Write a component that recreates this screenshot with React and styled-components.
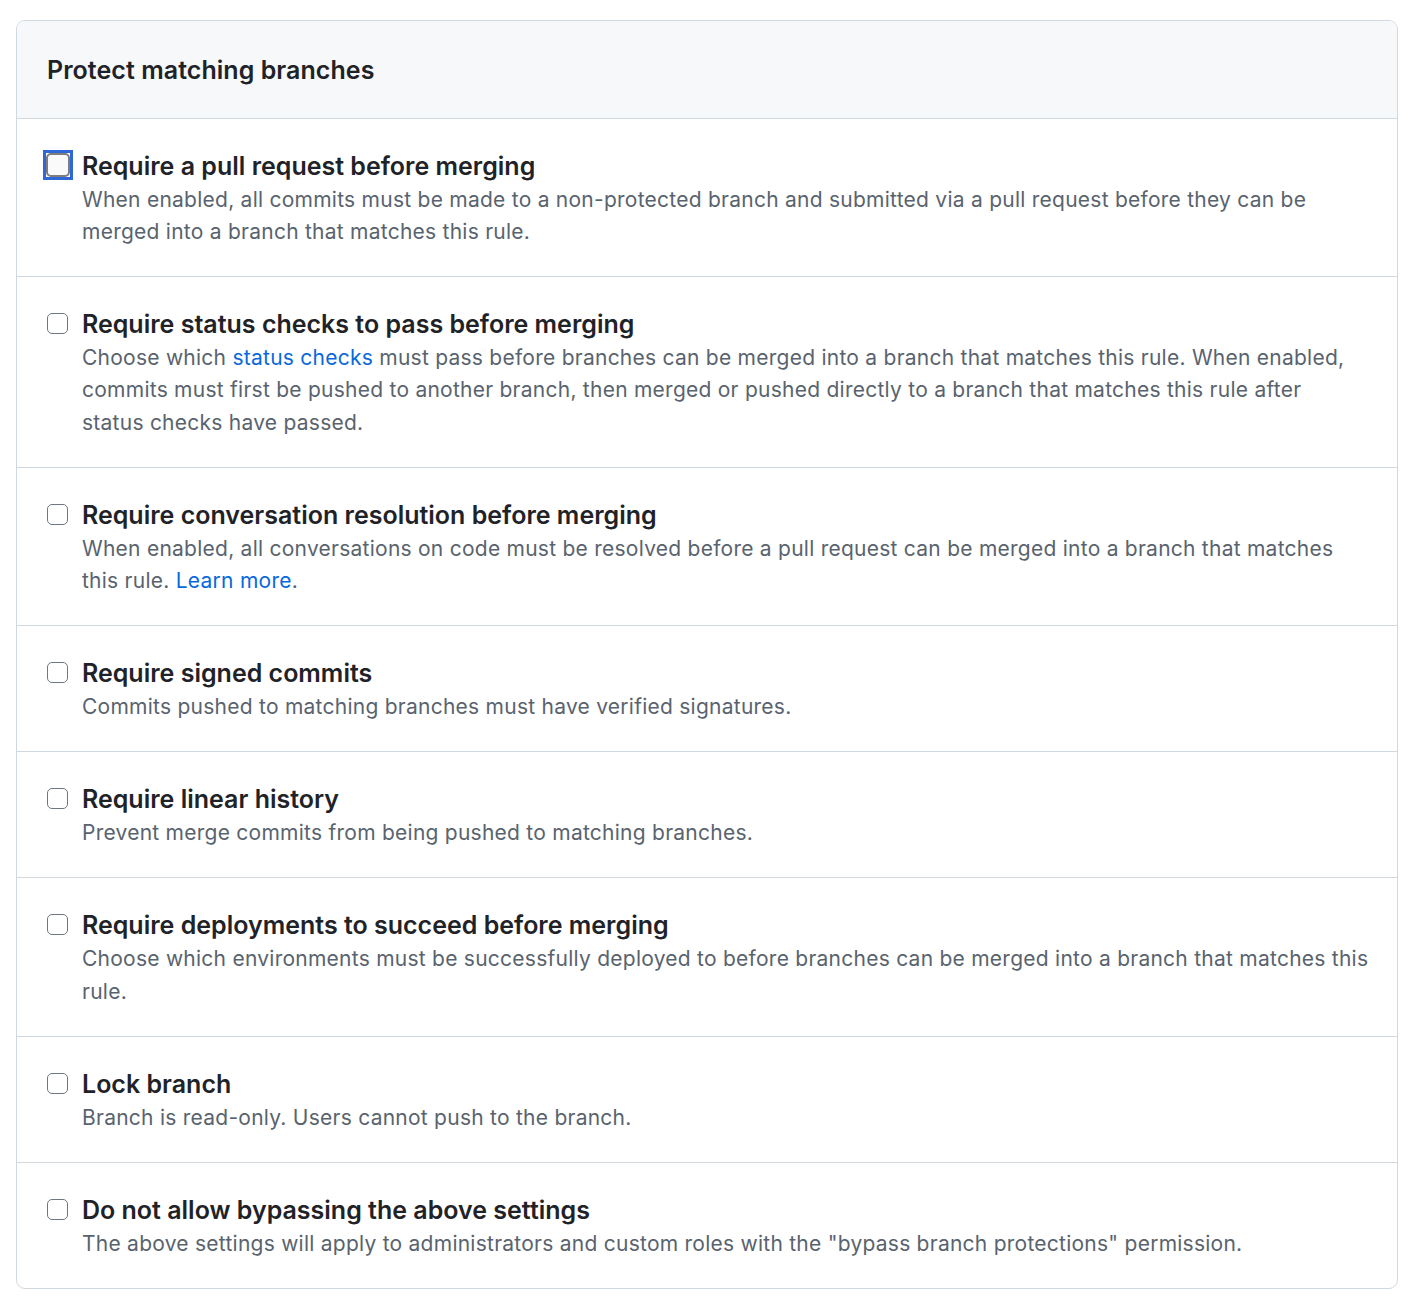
import React from "react";
import styled, { createGlobalStyle } from "styled-components";

const GlobalStyle = createGlobalStyle`
  body {
    margin: 0;
    background: #ffffff;
    font-family: "Inter", "Noto Sans", sans-serif;
    -webkit-font-smoothing: antialiased;
  }
`;

const Page = styled.div`
  padding: 20px 22px 20px 16px;
`;

const Card = styled.section`
  border: 1px solid #d1d9e0;
  border-radius: 9px;
  overflow: hidden;
  background: #ffffff;
`;

const Header = styled.header`
  display: flex;
  align-items: center;
  height: 97px;
  padding: 0 30px;
  background: #f6f8fa;
  border-bottom: 1px solid #d1d9e0;
`;

const HeaderTitle = styled.h3`
  margin: 0;
  font-size: 25px;
  font-weight: 600;
  color: #1f2328;
  letter-spacing: 0.05px;
`;

const Row = styled.div`
  display: flex;
  align-items: flex-start;
  gap: 14px;
  padding: 29px 24px 28px 30px;
  border-top: ${(props) => (props.first ? "none" : "1px solid #d1d9e0")};
`;

// square blue focus ring around the first checkbox
const FocusRing = styled.span`
  flex: 0 0 auto;
  display: inline-flex;
  margin: ${(props) => (props.focused ? "2px -5px 0 -4px" : "7px 0 0")};
  border: ${(props) => (props.focused ? "3px solid #2f68d6" : "none")};
`;

const Check = styled.input.attrs({ type: "checkbox" })`
  appearance: none;
  display: block;
  width: ${(props) => (props.focused ? "24px" : "21px")};
  height: ${(props) => (props.focused ? "24px" : "21px")};
  margin: 0;
  border: ${(props) => (props.focused ? "2px solid #7d7d7d" : "1.5px solid #6e7781")};
  border-radius: 5px;
  background: ${(props) => (props.focused ? "#fafafa" : "#ffffff")};
  outline: none;
  cursor: pointer;
`;

const Text = styled.div`
  flex: 1 1 auto;
  min-width: 0;
`;

const Title = styled.div`
  font-size: 25px;
  line-height: 36px;
  font-weight: 600;
  color: #1f2328;
`;

const Desc = styled.div`
  font-size: 21px;
  line-height: 32.15px;
  letter-spacing: 0.25px;
  color: #59636e;
`;

const Link = styled.a`
  color: #0969da;
  text-decoration: none;
`;

const rules = [
  {
    title: "Require a pull request before merging",
    desc: (
      <>
        When enabled, all commits must be made to a non-protected branch and submitted via a pull request before they can be
        <br />
        merged into a branch that matches this rule.
      </>
    ),
  },
  {
    title: "Require status checks to pass before merging",
    desc: (
      <>
        Choose which <Link href="#">status checks</Link> must pass before branches can be merged into a branch that matches this rule. When enabled,
        <br />
        commits must first be pushed to another branch, then merged or pushed directly to a branch that matches this rule after
        <br />
        status checks have passed.
      </>
    ),
  },
  {
    title: "Require conversation resolution before merging",
    desc: (
      <>
        When enabled, all conversations on code must be resolved before a pull request can be merged into a branch that matches
        <br />
        this rule. <Link href="#">Learn more</Link>.
      </>
    ),
  },
  {
    title: "Require signed commits",
    desc: "Commits pushed to matching branches must have verified signatures.",
  },
  {
    title: "Require linear history",
    desc: "Prevent merge commits from being pushed to matching branches.",
  },
  {
    title: "Require deployments to succeed before merging",
    desc: (
      <>
        Choose which environments must be successfully deployed to before branches can be merged into a branch that matches this
        <br />
        rule.
      </>
    ),
  },
  {
    title: "Lock branch",
    desc: "Branch is read-only. Users cannot push to the branch.",
  },
  {
    title: "Do not allow bypassing the above settings",
    desc: 'The above settings will apply to administrators and custom roles with the "bypass branch protections" permission.',
  },
];

function RuleRow({ rule, first }) {
  return (
    <Row first={first}>
      <FocusRing focused={first}>
        <Check focused={first} aria-label={rule.title} />
      </FocusRing>
      <Text>
        <Title>{rule.title}</Title>
        <Desc>{rule.desc}</Desc>
      </Text>
    </Row>
  );
}

export default function App() {
  return (
    <>
      <GlobalStyle />
      <Page>
        <Card>
          <Header>
            <HeaderTitle>Protect matching branches</HeaderTitle>
          </Header>
          {rules.map((rule, i) => (
            <RuleRow key={rule.title} rule={rule} first={i === 0} />
          ))}
        </Card>
      </Page>
    </>
  );
}
